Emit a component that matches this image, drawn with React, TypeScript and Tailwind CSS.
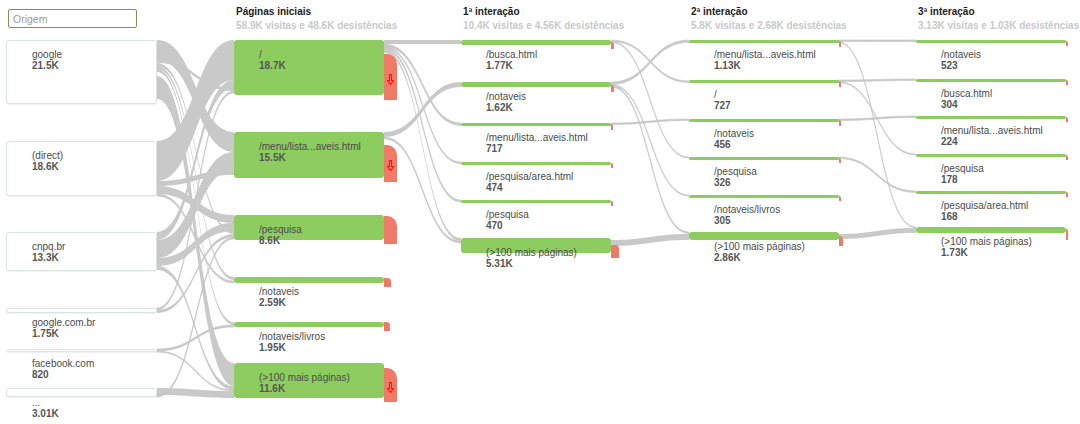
import React from "react";

interface Drop {
  y: number;
  h: number;
  w: number;
  arrow?: boolean;
}

interface FlowNodeData {
  label: string;
  value: string;
  y: number;
  h: number;
  drop?: Drop;
}

interface Column {
  title?: string;
  subtitle?: string;
  nodes: FlowNodeData[];
}

// link = [y at source, y at target, thickness]
type Link = [number, number, number];

const sources: FlowNodeData[] = [
  { label: "google", value: "21.5K", y: 40, h: 64 },
  { label: "(direct)", value: "18.6K", y: 141, h: 55 },
  { label: "cnpq.br", value: "13.3K", y: 232, h: 39 },
  { label: "google.com.br", value: "1.75K", y: 308, h: 5 },
  { label: "facebook.com", value: "820", y: 349, h: 3 },
  { label: "...", value: "3.01K", y: 388, h: 9 },
];

const columns: Column[] = [
  {
    title: "Páginas iniciais",
    subtitle: "58.9K visitas e 48.6K desistências",
    nodes: [
      { label: "/", value: "18.7K", y: 40, h: 55, drop: { y: 54, h: 46, w: 13, arrow: true } },
      { label: "/menu/lista...aveis.html", value: "15.5K", y: 132, h: 46, drop: { y: 145, h: 37, w: 13, arrow: true } },
      { label: "/pesquisa", value: "8.6K", y: 215, h: 25, drop: { y: 216, h: 28, w: 13 } },
      { label: "/notaveis", value: "2.59K", y: 277, h: 6, drop: { y: 278, h: 9, w: 7 } },
      { label: "/notaveis/livros", value: "1.95K", y: 322, h: 5, drop: { y: 322, h: 9, w: 6 } },
      { label: "(>100 mais páginas)", value: "11.6K", y: 363, h: 35, drop: { y: 368, h: 34, w: 13, arrow: true } },
    ],
  },
  {
    title: "1ª interação",
    subtitle: "10.4K visitas e 4.56K desistências",
    nodes: [
      { label: "/busca.html", value: "1.77K", y: 40, h: 5, drop: { y: 42, h: 7, w: 3 } },
      { label: "/notaveis", value: "1.62K", y: 82, h: 5, drop: { y: 85, h: 7, w: 3 } },
      { label: "/menu/lista...aveis.html", value: "717", y: 123, h: 3, drop: { y: 124, h: 6, w: 2 } },
      { label: "/pesquisa/area.html", value: "474", y: 162, h: 2.5, drop: { y: 163, h: 5, w: 2 } },
      { label: "/pesquisa", value: "470", y: 200, h: 3, drop: { y: 201, h: 5, w: 2 } },
      { label: "(>100 mais páginas)", value: "5.31K", y: 238, h: 15, drop: { y: 245, h: 13, w: 8 } },
    ],
  },
  {
    title: "2ª interação",
    subtitle: "5.8K visitas e 2.68K desistências",
    nodes: [
      { label: "/menu/lista...aveis.html", value: "1.13K", y: 40, h: 3, drop: { y: 41, h: 6, w: 2 } },
      { label: "/", value: "727", y: 80, h: 3, drop: { y: 81, h: 6, w: 2 } },
      { label: "/notaveis", value: "456", y: 119, h: 2.5, drop: { y: 120, h: 6, w: 2 } },
      { label: "/pesquisa", value: "326", y: 157, h: 2.5, drop: { y: 158, h: 5, w: 2 } },
      { label: "/notaveis/livros", value: "305", y: 195, h: 2.5, drop: { y: 196, h: 5, w: 2 } },
      { label: "(>100 mais páginas)", value: "2.86K", y: 232, h: 8, drop: { y: 236, h: 10, w: 4 } },
    ],
  },
  {
    title: "3ª interação",
    subtitle: "3.13K visitas e 1.03K desistências",
    nodes: [
      { label: "/notaveis", value: "523", y: 40, h: 2.5, drop: { y: 41, h: 5, w: 1.5 } },
      { label: "/busca.html", value: "304", y: 79, h: 2.5, drop: { y: 80, h: 5, w: 1.5 } },
      { label: "/menu/lista...aveis.html", value: "224", y: 116, h: 2.5, drop: { y: 117, h: 5, w: 1.5 } },
      { label: "/pesquisa", value: "178", y: 154, h: 2.5, drop: { y: 155, h: 5, w: 1.5 } },
      { label: "/pesquisa/area.html", value: "168", y: 191, h: 2.5, drop: { y: 192, h: 5, w: 1.5 } },
      { label: "(>100 mais páginas)", value: "1.73K", y: 227, h: 6, drop: { y: 229, h: 11, w: 2 } },
    ],
  },
];

// flows between neighbouring columns
const linkGroups: { x0: number; x1: number; links: Link[] }[] = [
  {
    x0: 157,
    x1: 234,
    links: [
      [40, 132, 20], [60, 88, 3], [63, 231, 3], [66, 277, 3], [69, 322, 3], [76, 363, 23],
      [141, 40, 40], [181, 170, 5], [186, 215, 8], [194, 281, 2],
      [232, 80, 8], [240, 152, 18], [258, 223, 8], [266, 386, 4],
      [308, 91, 2], [310, 234, 3],
      [349, 325, 2], [351, 390, 1],
      [388, 391, 7], [395, 237, 2],
    ],
  },
  {
    x0: 384,
    x1: 461,
    links: [
      [40, 40, 4], [44, 123, 2.5], [46.5, 162, 1.5], [48, 200, 2], [50, 238, 3],
      [132, 82, 5], [137, 241, 2],
    ],
  },
  {
    x0: 611,
    x1: 689,
    links: [
      [40, 81, 1.5], [41.5, 157, 1], [82, 40, 2.5], [84.5, 195, 1], [85.5, 232, 1.5],
      [123, 119, 1.5], [240, 234, 6],
    ],
  },
  {
    x0: 838,
    x1: 916,
    links: [
      [40, 40, 1.5], [41.5, 227, 1], [80, 79, 1.5], [81.5, 154, 1], [119, 116, 1.5],
      [157, 191, 1.5], [234, 228, 5],
    ],
  },
];

function bandPath(x0: number, x1: number, [y0, y1, h]: Link) {
  const mx = (x0 + x1) / 2;
  return `M${x0} ${y0} C${mx} ${y0} ${mx} ${y1} ${x1} ${y1} L${x1} ${y1 + h} C${mx} ${y1 + h} ${mx} ${y0 + h} ${x0} ${y0 + h} Z`;
}

function DropArrow() {
  return (
    <svg width="7" height="11" viewBox="0 0 7 11">
      <path d="M2.5 0.5H4.5V6.5H6.5L3.5 10.5L0.5 6.5H2.5Z" fill="none" stroke="#ff1010" strokeWidth="1.1" />
    </svg>
  );
}

function NodeLabel({ n, left }: { n: FlowNodeData; left: string }) {
  return (
    <div className={`absolute top-[9px] ${left} text-[10px] leading-[11px] whitespace-nowrap`}>
      <div className="text-[#4b4b4b]">{n.label}</div>
      <div className="font-bold text-[#555]">{n.value}</div>
    </div>
  );
}

function SourceNode({ n }: { n: FlowNodeData }) {
  return (
    <div className="absolute left-0 w-[151px]" style={{ top: n.y }}>
      <div
        className="bg-white border border-[#dce3e3] rounded-[3px] shadow-[0_1px_1px_rgba(0,0,0,0.06)]"
        style={{ height: n.h }}
      />
      <NodeLabel n={n} left="left-[26px]" />
    </div>
  );
}

function PageNode({ n }: { n: FlowNodeData }) {
  const d = n.drop;
  return (
    <div className="absolute left-0 w-[150px]" style={{ top: n.y }}>
      <div className="bg-[#8dcd5f] rounded-[3px]" style={{ height: n.h }} />
      {d && (
        <div
          className={`absolute left-[150px] bg-[#f07a68] flex items-center justify-center pt-[4px] ${
            d.w >= 10 ? "rounded-tr-[10px]" : "rounded-tr-[4px]"
          }`}
          style={{ top: d.y - n.y, height: d.h, width: d.w }}
        >
          {d.arrow && <DropArrow />}
        </div>
      )}
      <NodeLabel n={n} left="left-[25px]" />
    </div>
  );
}

export default function App() {
  return (
    <div className="relative w-[1080px] h-[424px] bg-white overflow-hidden font-['Liberation_Sans',Arial,sans-serif]">
      {/* flows */}
      <svg className="absolute inset-0" width="1080" height="424">
        {linkGroups.map((g, gi) =>
          g.links.map((l, li) => (
            <path
              key={`${gi}-${li}`}
              d={bandPath(g.x0, g.x1, l)}
              fill="#c9c9c9"
              stroke="#c4c4c4"
              strokeWidth={l[2] < 3 ? 0.6 : 0}
            />
          ))
        )}
      </svg>

      <div className="relative grid grid-cols-[228px_227px_228px_227px_164px] pl-[6px] h-full">
        {/* source column */}
        <div className="relative h-full">
          <input
            placeholder="Origem"
            className="mt-[9px] ml-[2px] w-[129px] h-[19px] px-[4px] border border-[#7f8f57] rounded-[2px] text-[10.5px] text-[#444] placeholder:text-[#9b9b9b] outline-none bg-white"
          />
          {sources.map((n) => (
            <SourceNode key={n.label} n={n} />
          ))}
        </div>

        {columns.map((c) => (
          <div key={c.title} className="relative h-full">
            <div className="pt-[6px] pl-[2px] text-[10px] leading-[12px] font-bold whitespace-nowrap">
              <div className="text-[#222]">{c.title}</div>
              <div className="mt-[2px] text-[#c9c9c9]">{c.subtitle}</div>
            </div>
            {c.nodes.map((n) => (
              <PageNode key={n.label + n.y} n={n} />
            ))}
          </div>
        ))}
      </div>
    </div>
  );
}
